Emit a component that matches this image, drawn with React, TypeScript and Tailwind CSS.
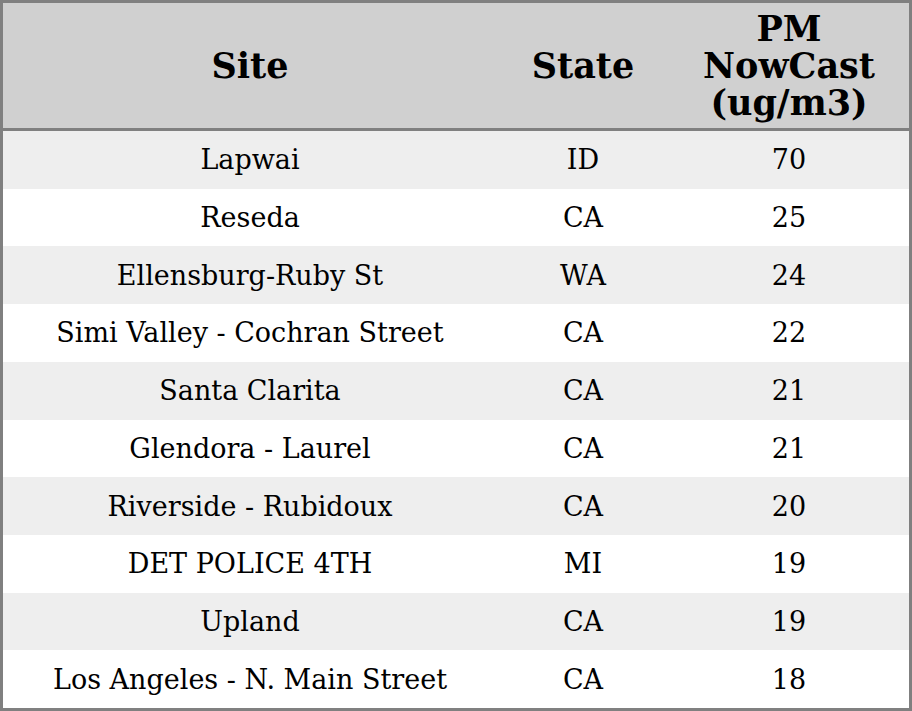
import React from "react";

const rows: [string, string, string][] = [
  ["Lapwai", "ID", "70"],
  ["Reseda", "CA", "25"],
  ["Ellensburg-Ruby St", "WA", "24"],
  ["Simi Valley - Cochran Street", "CA", "22"],
  ["Santa Clarita", "CA", "21"],
  ["Glendora - Laurel", "CA", "21"],
  ["Riverside - Rubidoux", "CA", "20"],
  ["DET POLICE 4TH", "MI", "19"],
  ["Upland", "CA", "19"],
  ["Los Angeles - N. Main Street", "CA", "18"],
];

export default function App() {
  return (
    <div className="w-[912px] h-[711px] bg-white" style={{ fontFamily: '"DejaVu Serif", serif' }}>
      <div className="border-[3px] border-[#808080] h-[711px] flex flex-col text-black">
        <div className="grid grid-cols-[494px_172px_1fr] h-[128px] shrink-0 bg-[#d0d0d0] border-b-[3px] border-[#808080] font-bold text-[35px] leading-[37px]">
          <div className="flex items-center justify-center text-center">Site</div>
          <div className="flex items-center justify-center text-center">State</div>
          <div className="flex items-center justify-center text-center">
            PM
            <br />
            NowCast
            <br />
            (ug/m3)
          </div>
        </div>
        <div className="flex-1 grid grid-rows-10">
          {rows.map((r, i) => (
            <div
              key={i}
              className={`grid grid-cols-[494px_172px_1fr] items-center text-[27px] leading-none ${i % 2 === 0 ? "bg-[#eeeeee]" : "bg-white"}`}
            >
              <div className="text-center">{r[0]}</div>
              <div className="text-center">{r[1]}</div>
              <div className="text-center">{r[2]}</div>
            </div>
          ))}
        </div>
      </div>
    </div>
  );
}
